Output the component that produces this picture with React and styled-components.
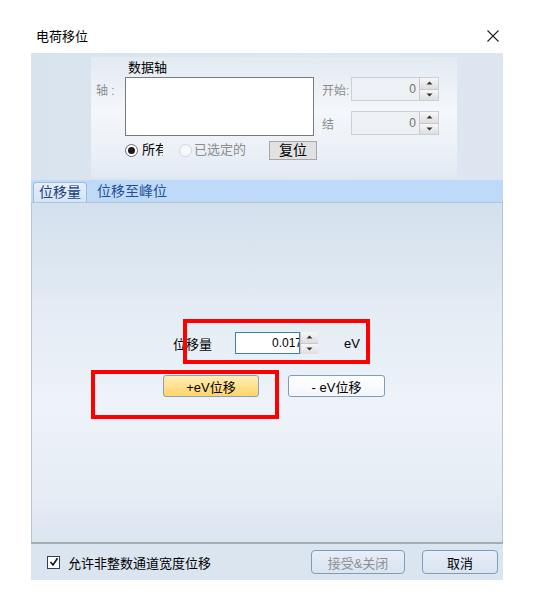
import React from 'react'
import styled, {createGlobalStyle} from 'styled-components'

const GlobalStyle = createGlobalStyle`
    body {
        margin: 0;
        background: #fff;
        font-family: "Liberation Sans", "Noto Sans CJK SC", sans-serif;
    }
`

const Page = styled.div`
    position: relative;
    width: 533px;
    height: 602px;
    overflow: hidden;
    background: #fff;
    color: #000;
`

const TitleBar = styled.div`
    height: 53px;
    box-sizing: border-box;
    display: flex;
    justify-content: space-between;
    align-items: flex-start;
    padding: 29px 34px 0 36px;
`

const Title = styled.span`
    font-size: 13px;
    line-height: 16px;
`

const Close = styled.svg`
    margin-top: 1px;
`

const Dialog = styled.div`
    margin-left: 31px;
    width: 472px;
`

const TopPanel = styled.div`
    height: 127px;
    box-sizing: border-box;
    padding: 4px 0 0 60px;
    background: linear-gradient(to right, #d8e3ee, #dfe8f1 60%, #dde6f0);
`

const InnerPanel = styled.div`
    width: 366px;
    height: 121px;
    display: grid;
    grid-template-columns: 34px 189px 8px 29px 88px;
    grid-template-rows: 20px 24px 10px 25px 24px;
    background: linear-gradient(to bottom, #e2eaf2, #f4f7fb 45%, #ecf1f7 75%, #e1e9f2);
`

const AxisTitle = styled.span`
    grid-column: 2;
    grid-row: 1;
    align-self: end;
    padding: 0 0 1px 3px;
    font-size: 13px;
    line-height: 16px;
`

const FieldLabel = styled.span`
    grid-column: ${p => p.col};
    grid-row: ${p => p.row};
    align-self: center;
    padding-left: ${p => p.pad || 0}px;
    font-size: 12px;
    color: #8c8c8c;
    white-space: nowrap;
`

const ListBox = styled.div`
    grid-column: 2;
    grid-row: 2 / 5;
    border: 1px solid #7a7a7a;
    background: #fff;
`

const SpinWrap = styled.div`
    grid-column: 5;
    grid-row: ${p => p.row};
    height: 24px;
    display: flex;
    box-sizing: border-box;
    border: 1px solid #c9d0d8;
    background: ${p => p.disabled ? '#edf1f5' : '#fff'};
`

const SpinValue = styled.span`
    flex: 1;
    text-align: right;
    padding-right: 3px;
    font-size: 12px;
    line-height: 22px;
    color: #6f6f6f;
`

const Arrows = styled.div`
    width: ${p => p.w || 18}px;
    display: flex;
    flex-direction: column;
    border-left: 1px solid #c8c8c8;
`

const ArrowBtn = styled.div`
    flex: 1;
    display: flex;
    align-items: center;
    justify-content: center;
    background: linear-gradient(#f7f7f7, #dedede);
    & + & {
        border-top: 1px solid #c8c8c8;
    }
`

const RadioRow = styled.div`
    grid-column: 2 / 6;
    grid-row: 5;
    display: flex;
    align-items: center;
    padding-top: 4px;
`

const Radio = styled.span`
    width: 13px;
    height: 13px;
    box-sizing: border-box;
    border-radius: 50%;
    border: 1px solid ${p => p.disabled ? '#cfd6de' : '#6d6d6d'};
    background: ${p => p.disabled ? '#f6f8fa' : '#fff'};
    display: flex;
    align-items: center;
    justify-content: center;
    margin-left: ${p => p.ml || 0}px;
    &::after {
        content: '';
        display: ${p => p.checked ? 'block' : 'none'};
        width: 7px;
        height: 7px;
        border-radius: 50%;
        background: #1a1a1a;
    }
`

const RadioText = styled.span`
    margin-left: ${p => p.ml || 4}px;
    width: ${p => p.w ? p.w + 'px' : 'auto'};
    overflow: hidden;
    white-space: nowrap;
    font-size: 13px;
    line-height: 16px;
    color: ${p => p.disabled ? '#8c8c8c' : '#000'};
`

const ResetButton = styled.button`
    margin-left: 23px;
    width: 48px;
    height: 19px;
    padding: 0;
    border: 1px solid #a6a6a6;
    background: #e1e1e1;
    font-family: inherit;
    font-size: 14px;
    line-height: 16px;
    color: #000;
`

const TabStrip = styled.div`
    height: 22px;
    box-sizing: border-box;
    display: flex;
    align-items: flex-end;
    padding-left: 2px;
    background: #bfdaf8;
`

const Tab = styled.div`
    height: 20px;
    box-sizing: border-box;
    padding: 0 ${p => p.active ? 5 : 0}px;
    margin-left: ${p => p.active ? 0 : 10}px;
    border: ${p => p.active ? '1px solid #a2bcd9' : 'none'};
    border-bottom: none;
    border-radius: 3px 4px 0 0;
    background: ${p => p.active ? 'linear-gradient(#e6effa, #d3e4f7)' : 'transparent'};
    font-size: 14px;
    line-height: 19px;
    color: ${p => p.active ? '#1b3f7c' : '#1f4f98'};
`

const TabPage = styled.div`
    height: 340px;
    box-sizing: border-box;
    border: 1px solid #b5c3d2;
    border-bottom: none;
    padding: 129px 0 0 141px;
    background: linear-gradient(to bottom, #d3e0ed, #e3ebf4 30%, #eef3f9 60%, #e6edf5 85%, #dbe5f0);
`

const ShiftRow = styled.div`
    display: flex;
    align-items: center;
    height: 22px;
`

const ShiftLabel = styled.span`
    width: 62px;
    font-size: 13px;
`

const NumBox = styled.div`
    display: flex;
    height: 22px;
`

const NumField = styled.div`
    width: 65px;
    box-sizing: border-box;
    border: 1px solid #3d80b8;
    background: #fff;
    display: flex;
    justify-content: flex-end;
    overflow: hidden;
`

const NumText = styled.span`
    margin-right: -3px;
    font-size: 12px;
    line-height: 20px;
    white-space: nowrap;
`

const Unit = styled.span`
    margin-left: 26px;
    font-size: 13px;
`

const ButtonRow = styled.div`
    display: flex;
    margin: 21px 0 0 -10px;
    gap: 29px;
`

const ShiftButton = styled.button`
    width: ${p => p.w}px;
    height: 22px;
    padding: 0;
    border-radius: 3px;
    border: 1px solid ${p => p.primary ? '#8aa0bb' : '#7f9db9'};
    background: ${p => p.primary ? 'linear-gradient(#ffeeb9, #ffd468)' : 'linear-gradient(#fff, #f3f6fa)'};
    font-family: inherit;
    font-size: 13px;
    color: #000;
`

const Footer = styled.div`
    height: 38px;
    box-sizing: border-box;
    border-top: 2px solid #a7abb0;
    display: flex;
    align-items: center;
    padding: 0 5px 0 16px;
    background: #dae5f0;
`

const Check = styled.span`
    width: 13px;
    height: 13px;
    box-sizing: border-box;
    border: 1px solid #2f3f63;
    background: #fff;
    display: flex;
    align-items: center;
    justify-content: center;
`

const CheckText = styled.span`
    margin-left: 8px;
    font-size: 13px;
`

const FooterButton = styled.button`
    width: ${p => p.w}px;
    height: 24px;
    margin-left: ${p => p.ml};
    padding: 0;
    border-radius: 4px;
    border: 1px solid #7f9db9;
    background: linear-gradient(#e6eef8, #d8e4f1);
    font-family: inherit;
    font-size: 13px;
    color: ${p => p.disabled ? '#8e8e8e' : '#000'};
`

const Mark = styled.div`
    position: absolute;
    box-sizing: border-box;
    border: 4px solid #ff0000;
`

const Tri = ({up}) => (
    <svg width="7" height="4" viewBox="0 0 7 4">
        <path d={up ? 'M0.5 3.5 L3.5 0.5 L6.5 3.5 Z' : 'M0.5 0.5 L3.5 3.5 L6.5 0.5 Z'} fill="#333" />
    </svg>
)

const Spin = ({row, disabled, value}) => (
    <SpinWrap row={row} disabled={disabled}>
        <SpinValue>{value}</SpinValue>
        <Arrows>
            <ArrowBtn><Tri up /></ArrowBtn>
            <ArrowBtn><Tri /></ArrowBtn>
        </Arrows>
    </SpinWrap>
)

function App() {
    return (
        <Page>
            <GlobalStyle />
            <TitleBar>
                <Title>电荷移位</Title>
                <Close width="12" height="12" viewBox="0 0 12 12">
                    <path d="M0.5 0.5 L11.5 11.5 M11.5 0.5 L0.5 11.5" stroke="#222" strokeWidth="1.1" />
                </Close>
            </TitleBar>
            <Dialog>
                <TopPanel>
                    <InnerPanel>
                        <AxisTitle>数据轴</AxisTitle>
                        <FieldLabel col={1} row={2} pad={5}>轴 :</FieldLabel>
                        <ListBox />
                        <FieldLabel col={4} row={2}>开始:</FieldLabel>
                        <Spin row={2} disabled value="0" />
                        <FieldLabel col={4} row={4}>结</FieldLabel>
                        <Spin row={4} disabled value="0" />
                        <RadioRow>
                            <Radio checked />
                            <RadioText w={21}>所有</RadioText>
                            <Radio disabled ml={16} />
                            <RadioText disabled ml={2}>已选定的</RadioText>
                            <ResetButton>复位</ResetButton>
                        </RadioRow>
                    </InnerPanel>
                </TopPanel>
                <TabStrip>
                    <Tab active>位移量</Tab>
                    <Tab>位移至峰位</Tab>
                </TabStrip>
                <TabPage>
                    <ShiftRow>
                        <ShiftLabel>位移量</ShiftLabel>
                        <NumBox>
                            <NumField><NumText>0.017</NumText></NumField>
                            <Arrows w={17}>
                                <ArrowBtn><Tri up /></ArrowBtn>
                                <ArrowBtn><Tri /></ArrowBtn>
                            </Arrows>
                        </NumBox>
                        <Unit>eV</Unit>
                    </ShiftRow>
                    <ButtonRow>
                        <ShiftButton primary w={96}>+eV位移</ShiftButton>
                        <ShiftButton w={97}>- eV位移</ShiftButton>
                    </ButtonRow>
                </TabPage>
                <Footer>
                    <Check>
                        <svg width="10" height="10" viewBox="0 0 10 10">
                            <path d="M1.5 5 L4 8 L8.5 1.2" fill="none" stroke="#111" strokeWidth="1.6" />
                        </svg>
                    </Check>
                    <CheckText>允许非整数通道宽度位移</CheckText>
                    <FooterButton w={94} ml="auto" disabled>接受&amp;关闭</FooterButton>
                    <FooterButton w={76} ml="17px">取消</FooterButton>
                </Footer>
            </Dialog>
            <Mark style={{left: 183, top: 319, width: 187, height: 45}} />
            <Mark style={{left: 91, top: 370, width: 188, height: 49}} />
        </Page>
    )
}

export default App
